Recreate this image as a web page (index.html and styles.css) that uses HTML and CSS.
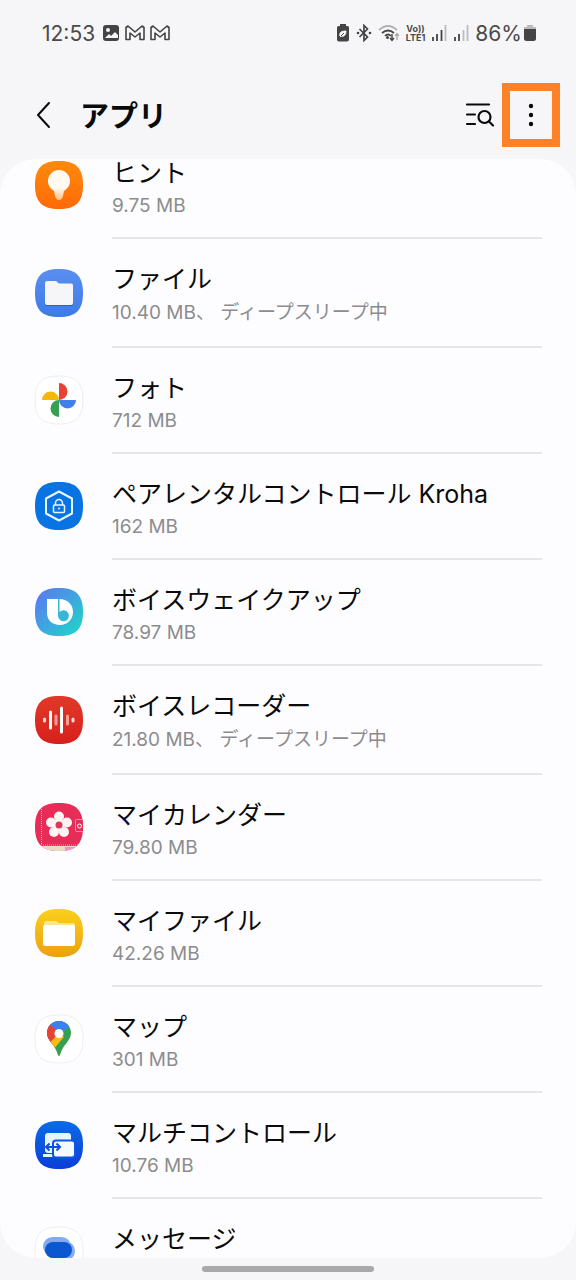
FILE: index.html
```html
<!DOCTYPE html>
<html lang="ja">
<head>
    <meta charset="UTF-8">
    <meta name="viewport" content="width=device-width, initial-scale=1.0">
    <title>アプリ</title>
    <link rel="stylesheet" href="styles.css">
</head>
<body>
    <div class="statusBar">
        <div class="statusLeft">
            <span class="clock">12:53</span>
            <svg width="18" height="18" viewBox="0 0 18 18"><rect x="1" y="1" width="16" height="16" rx="3" fill="#444"/><circle cx="6" cy="6" r="2" fill="#f6f6f8"/><path d="M3 14l4-4 2 2 4-4 3 3v3z" fill="#f6f6f8"/></svg>
            <svg width="20" height="16" viewBox="0 0 20 16"><path d="M1 14.500V2.500L3 1l7 6 7-6 2 1.500v12h-4V8l-5 4-5-4v6.500z" fill="none" stroke="#444" stroke-width="1.600" stroke-linejoin="round"/></svg>
            <svg width="20" height="16" viewBox="0 0 20 16"><path d="M1 14.500V2.500L3 1l7 6 7-6 2 1.500v12h-4V8l-5 4-5-4v6.500z" fill="none" stroke="#444" stroke-width="1.600" stroke-linejoin="round"/></svg>
        </div>
        <div class="statusRight">
            <svg width="14" height="18" viewBox="0 0 14 18"><path d="M4 0h6v2h1.500Q13 2 13 4v11.500q0 2-2 2H3q-2 0-2-2V4q0-2 1.500-2H4z" fill="#444"/><path d="M4 12c-1-4 2-5 6-5 0 4-2 6-5 5M4 13l4-4" fill="#f6f6f8" stroke="#f6f6f8"/><path d="M5 12l3-3" stroke="#444"/></svg>
            <svg width="16" height="18" viewBox="0 0 16 18"><path d="M3.500 5l8 8L8 16.500v-15L11.500 5l-8 8" fill="none" stroke="#444" stroke-width="1.700"/><circle cx="2" cy="9" r="1.300" fill="#444"/><circle cx="14" cy="9" r="1.300" fill="#444"/></svg>
            <svg width="22" height="18" viewBox="0 0 22 18"><g fill="none" stroke-width="1.700"><path d="M1 6Q10-2 19 6" stroke="#b0b0b2"/><path d="M4 9q6-5 12 0M7 12q3-3 6 0" stroke="#444"/><path d="M14 10v6M12 14l2 2.500 2-2.500" stroke="#444" stroke-width="1.400"/><path d="M19 16v-6M17 12l2-2.500 2 2.500" stroke="#aaa" stroke-width="1.400"/></g><circle cx="9.500" cy="13.500" r="1.500" fill="#444"/></svg>
            <span class="volte"><span>Vo))</span><span>LTE1</span></span>
            <svg width="16" height="18" viewBox="0 0 16 18"><path d="M2 13v4M6 10v7M10.500 6v11" stroke="#444" stroke-width="1.800"/><path d="M14.500 1v16" stroke="#bcbcbe" stroke-width="1.800"/></svg>
            <svg width="16" height="18" viewBox="0 0 16 18"><path d="M2 13v4M6 10v7" stroke="#444" stroke-width="1.800"/><path d="M10.500 6v11M14.500 1v16" stroke="#bcbcbe" stroke-width="1.800"/></svg>
            <span class="battery">86%<svg width="12" height="16" viewBox="0 0 12 16"><path d="M3 0h6v2h3v3H0V2h3z" fill="#bbb"/><path d="M0 4h12v9.500q0 2.500-2.500 2.500h-7Q0 16 0 13.500z" fill="#444"/></svg></span>
        </div>
    </div>

    <header class="titleBar">
        <button class="iconButton" type="button" aria-label="戻る">
            <svg width="18" height="28" viewBox="0 0 18 28"><path d="M15 2L4 14l11 12" fill="none" stroke="#0a0a0a" stroke-width="2" stroke-linecap="round" stroke-linejoin="round"/></svg>
        </button>
        <h1>アプリ</h1>
        <button class="iconButton" type="button" aria-label="検索">
            <svg width="30" height="24" viewBox="0 0 30 24"><g fill="none" stroke="#0a0a0a" stroke-width="2.200" stroke-linecap="round"><path d="M2 1.500h22M2 11.500h8M2 21h8"/><circle cx="19.500" cy="14" r="6"/><path d="M24 18.500l4 4"/></g></svg>
        </button>
        <button class="iconButton moreButton" type="button" aria-label="その他のオプション">
            <svg width="6" height="24" viewBox="0 0 6 24" fill="#0a0a0a"><circle cx="3" cy="3" r="2.200"/><circle cx="3" cy="12" r="2.200"/><circle cx="3" cy="21" r="2.200"/></svg>
        </button>
    </header>

    <svg class="defs" width="0" height="0" aria-hidden="true">
        <defs>
            <path id="tile" d="M24 0C41 0 48 7 48 24S41 48 24 48 0 41 0 24 7 0 24 0z"/>
            <clipPath id="tileClip"><use href="#tile"/></clipPath>
            <clipPath id="pinClip"><path d="M24 6a12 12 0 0 1 12 12c0 8-8 11-11 22q-1 2-2 0C20 29 12 26 12 18A12 12 0 0 1 24 6z"/></clipPath>
            <linearGradient id="orange" x2="0" y2="1"><stop stop-color="#ff8a0c"/><stop offset="1" stop-color="#ff6a08"/></linearGradient>
            <linearGradient id="bulb" x2="0" y2="1"><stop offset=".6" stop-color="#fffaf2"/><stop offset="1" stop-color="#ffc080"/></linearGradient>
            <linearGradient id="filesBlue" x2="0" y2="1"><stop stop-color="#5a8ff0"/><stop offset="1" stop-color="#3c7be8"/></linearGradient>
            <linearGradient id="bixby" x2="1" y2="1"><stop offset=".1" stop-color="#5a7cf0"/><stop offset=".9" stop-color="#22d0cc"/></linearGradient>
            <linearGradient id="red" x2="0" y2="1"><stop stop-color="#e03a28"/><stop offset="1" stop-color="#d81f1c"/></linearGradient>
            <linearGradient id="yellow" x2="0" y2="1"><stop stop-color="#fbd01c"/><stop offset="1" stop-color="#eca010"/></linearGradient>
            <linearGradient id="multi" x2="0" y2="1"><stop stop-color="#0a6ce8"/><stop offset="1" stop-color="#0c3ed8"/></linearGradient>
        </defs>
    </svg>

    <main class="panel">
        <ul class="appList">
            <li class="app">
                <svg class="appIcon" viewBox="0 0 48 48"><use href="#tile" fill="url(#orange)"/><path d="M24 9a11 11 0 0 1 11 11c0 5-3 8-6 10l-1 5q-1 4-4 4t-4-4l-1-5c-3-2-6-5-6-10A11 11 0 0 1 24 9z" fill="url(#bulb)"/></svg>
                <div class="appText"><h2>ヒント</h2><p>9.75 MB</p></div>
            </li>
            <li class="app tall">
                <svg class="appIcon" viewBox="0 0 48 48"><use href="#tile" fill="url(#filesBlue)"/><path d="M10 15q0-2 2-2h9l3 3h12q2 0 2 2v17q0 2-2 2H12q-2 0-2-2z" fill="#2c62c4"/><path d="M10 14q0-2 2-2h9l3 2.500h12q2 0 2 2V34q0 2-2 2H12q-2 0-2-2z" fill="#f6f6f8"/></svg>
                <div class="appText"><h2>ファイル</h2><p>10.40 MB、 ディープスリープ中</p></div>
            </li>
            <li class="app">
                <svg class="appIcon" viewBox="0 0 48 48"><use href="#tile" fill="#fff" stroke="#ededf0"/><path d="M24 7a8.500 8.500 0 0 1 0 17z" fill="#e64335"/><path d="M41 24a8.500 8.500 0 0 1-17 0z" fill="#4080ec"/><path d="M24 41a8.500 8.500 0 0 1 0-17z" fill="#34a050"/><path d="M7 24a8.500 8.500 0 0 1 17 0z" fill="#f4b80c"/></svg>
                <div class="appText"><h2>フォト</h2><p>712 MB</p></div>
            </li>
            <li class="app">
                <svg class="appIcon" viewBox="0 0 48 48"><use href="#tile" fill="#0874e4"/><g fill="none" stroke="#e8f8ff" stroke-linejoin="round"><path d="M24 9.500l13 7v15l-13 7-13-7v-15z" stroke-width="2"/><rect x="18.500" y="23" width="11" height="7.500" rx="1" stroke-width="1.500"/><path d="M20.500 23v-2a3.500 3.500 0 0 1 7 0v2" stroke-width="1.500"/></g><circle cx="24" cy="26.500" r="1" fill="#e8f8ff"/></svg>
                <div class="appText"><h2>ペアレンタルコントロール Kroha</h2><p>162 MB</p></div>
            </li>
            <li class="app">
                <svg class="appIcon" viewBox="0 0 48 48"><use href="#tile" fill="url(#bixby)"/><path d="M12 11h12c9 0 14 6 14 13a13 13 0 0 1-13 13C17 37 12 32 12 25z" fill="#fff"/><path d="M23 11h1.500v13a5.500 5.500 0 1 1-1.500 4z" fill="#36b8d6"/></svg>
                <div class="appText"><h2>ボイスウェイクアップ</h2><p>78.97 MB</p></div>
            </li>
            <li class="app tall">
                <svg class="appIcon" viewBox="0 0 48 48"><use href="#tile" fill="url(#red)"/><g stroke-linecap="round" stroke-width="3"><path d="M15.500 16v16M26.500 12v24" stroke="#fff"/><path d="M9.500 23v2M38 23v2" stroke="#ffdcd8"/><path d="M21 20v8M32.500 20v8" stroke="#ff9c94"/></g></svg>
                <div class="appText"><h2>ボイスレコーダー</h2><p>21.80 MB、 ディープスリープ中</p></div>
            </li>
            <li class="app">
                <svg class="appIcon" viewBox="0 0 48 48"><g clip-path="url(#tileClip)"><path d="M0 0h48v48H0z" fill="#e82c58"/><path d="M0 43h48v5H0z" fill="#e8dcc4"/><path d="M30 44h18v4H30z" fill="#f090c8"/><path d="M6.500 0v42M4 42h44" fill="none" stroke="#ffacc0" stroke-dasharray="1 1"/><rect x="40.500" y="16.500" width="9" height="12" rx="1" fill="#e82c58" stroke="#ff90a8"/><circle cx="44.500" cy="23" r="2" fill="none" stroke="#fff"/></g><g fill="#fff5f5"><circle cx="24" cy="13.500" r="5"/><circle cx="32" cy="19.500" r="5"/><circle cx="29" cy="29" r="5"/><circle cx="19" cy="29" r="5"/><circle cx="16" cy="19.500" r="5"/><circle cx="24" cy="22" r="6"/></g><circle cx="24" cy="22" r="3.500" fill="#dc3858"/></svg>
                <div class="appText"><h2>マイカレンダー</h2><p>79.80 MB</p></div>
            </li>
            <li class="app">
                <svg class="appIcon" viewBox="0 0 48 48"><use href="#tile" fill="url(#yellow)"/><path d="M9 14q0-2 2-2h10l3 2h14q2 0 2 2v8H9z" fill="#ffe48c"/><rect x="8" y="16" width="32" height="21" rx="2" fill="#fff"/></svg>
                <div class="appText"><h2>マイファイル</h2><p>42.26 MB</p></div>
            </li>
            <li class="app">
                <svg class="appIcon" viewBox="0 0 48 48"><use href="#tile" fill="#fff" stroke="#ededf0"/><g clip-path="url(#pinClip)"><path d="M10 4h28v38H10z" fill="#34a050"/><path d="M39 4L10 38V4z" fill="#3c80ee"/><path d="M14 8l10 10-14 16V4z" fill="#e64335"/><path d="M10 33l14-15 5 4-12 14z" fill="#f8bc10"/><path d="M14 8l10-4h14l-4 8-10 6z" fill="#3c80ee"/></g><circle cx="24" cy="18.500" r="4.500" fill="#fff"/></svg>
                <div class="appText"><h2>マップ</h2><p>301 MB</p></div>
            </li>
            <li class="app">
                <svg class="appIcon" viewBox="0 0 48 48"><use href="#tile" fill="url(#multi)"/><rect x="10" y="12" width="26" height="20" rx="3" fill="#e8f4ff"/><path d="M8 33h12v3H8z" fill="#e8f4ff"/><rect x="18" y="19.500" width="22" height="17" rx="3" fill="#f4f9ff" stroke="#0c56e0" stroke-width="2"/><path d="M12 26h12M14.500 22.500L11 26l3.500 3.500M21.500 22.500L25 26l-3.500 3.500" fill="none" stroke="#0c50e0" stroke-width="2"/></svg>
                <div class="appText"><h2>マルチコントロール</h2><p>10.76 MB</p></div>
            </li>
            <li class="app">
                <svg class="appIcon" viewBox="0 0 48 48"><use href="#tile" fill="#fff" stroke="#ededf0"/><rect x="8" y="10" width="28" height="19" rx="9.500" fill="#84aaf0"/><rect x="13" y="14" width="27" height="20" rx="10" fill="#84aaf0"/><rect x="10" y="15" width="27" height="16" rx="8" fill="#0a57d0"/></svg>
                <div class="appText"><h2>メッセージ</h2></div>
            </li>
        </ul>
    </main>
    <div class="gestureBar"><span></span></div>
</body>
</html>
```
FILE: styles.css
```css
* {
    box-sizing: border-box;
}
body {
    margin: 0;
    height: 100vh;
    display: flex;
    flex-direction: column;
    overflow: hidden;
    font-family: Inter, "Noto Sans CJK JP", sans-serif;
    background-color: #f6f6f8;
    color: #0a0a0a;
}
h1, h2, p, ul {
    margin: 0;
    padding: 0;
}
svg {
    display: block;
    flex: none;
}
.defs {
    position: absolute;
}

/* Status bar */
.statusBar {
    display: flex;
    justify-content: space-between;
    align-items: center;
    height: 66px;
    padding: 0 40px 0 42px;
    color: #4a4a4a;
    font-size: 21px;
}
.statusLeft,
.statusRight {
    display: flex;
    align-items: center;
    gap: 6px;
}
.statusLeft {
    gap: 5px;
}
.clock {
    margin-right: 2px;
}
.volte {
    display: flex;
    flex-direction: column;
    align-items: center;
    font-size: 9px;
    line-height: 9px;
    font-weight: 700;
}
.battery {
    display: flex;
    align-items: center;
    gap: 2px;
}

/* Title bar */
.titleBar {
    display: flex;
    align-items: center;
    height: 93px;
    padding: 4px 16px 0 34px;
}
.titleBar h1 {
    flex: 1;
    padding: 4px 0 0 28px;
    font-size: 29px;
    line-height: 40px;
    font-weight: 700;
}
.iconButton {
    display: flex;
    align-items: center;
    justify-content: center;
    padding: 0;
    border: none;
    background: none;
    color: inherit;
    cursor: pointer;
}
.moreButton {
    width: 58px;
    height: 64px;
    margin-left: 7px;
    border: 8px solid #ff8228;
}

/* App list, scrolled part way into the first row */
.panel {
    flex: 1;
    min-height: 0;
    overflow: hidden;
    border-radius: 36px;
    background-color: #fdfdff;
}
.appList {
    margin-top: -26px;
    list-style: none;
}
.app {
    display: flex;
    align-items: center;
    gap: 29px;
    height: 106px;
    padding: 0 34px 0 35px;
}
.app.tall {
    height: 109px;
}
.appIcon {
    width: 48px;
    height: 48px;
    margin-bottom: 2px;
    overflow: visible;
}
.appText {
    flex: 1;
    align-self: stretch;
    padding-top: 23px;
    border-bottom: 2px solid #e6e6e9;
}
.appText h2 {
    font-size: 25px;
    line-height: 34px;
    font-weight: 400;
}
.appText p {
    font-size: 19px;
    line-height: 32px;
    color: #8c8c8e;
}
.tall p {
    line-height: 34px;
}

.gestureBar {
    display: flex;
    justify-content: center;
    align-items: center;
    height: 22px;
}
.gestureBar span {
    width: 30%;
    height: 6px;
    border-radius: 3px;
    background-color: #a9a9ab;
}
```
